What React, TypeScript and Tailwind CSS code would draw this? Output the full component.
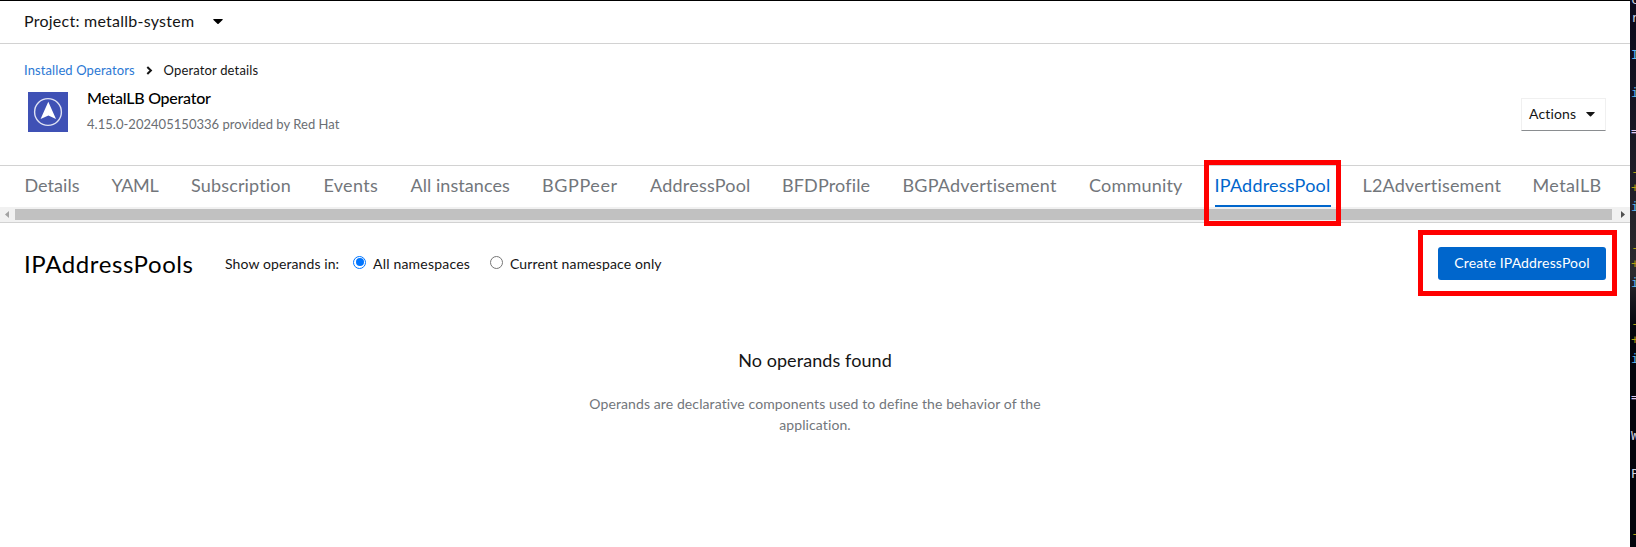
import type { ReactNode } from "react";

const tabs = [
  { label: "Details", cls: "w-[55px] tracking-[0.05px]" },
  { label: "YAML", cls: "w-[47.5px] -tracking-[0.3px]" },
  { label: "Subscription", cls: "w-[100.5px] tracking-[0.16px]" },
  { label: "Events", cls: "w-[55px] tracking-[0.3px]" },
  { label: "All instances", cls: "w-[99.5px] tracking-[0.06px]" },
  { label: "BGPPeer", cls: "w-[76px] tracking-[0.6px]" },
  { label: "AddressPool", cls: "w-[100px] tracking-[0.22px]" },
  { label: "BFDProfile", cls: "w-[88.5px] tracking-[0.15px]" },
  { label: "BGPAdvertisement", cls: "w-[154.5px] tracking-[0.22px]" },
  { label: "Community", cls: "w-[93.5px] tracking-[0.2px]" },
  { label: "IPAddressPool", cls: "w-[116px] tracking-[0.22px]", active: true },
  { label: "L2Advertisement", cls: "w-[138px] tracking-[0.2px]" },
  { label: "MetalLB", cls: "w-[70px] tracking-[0.4px]" },
];

function Caret({ size }: { size: number }) {
  return (
    <svg width={size} height={size / 2} viewBox="0 0 10 5" className="shrink-0">
      <path d="M0.6 0h8.8q.6.3.1.9L5.6 4.7q-.6.5-1.2 0L.5.9Q0 .3.6 0z" fill="currentColor" />
    </svg>
  );
}

function Logo() {
  return (
    <svg width="40" height="40" viewBox="0 0 40 40" className="mt-[5px] shrink-0">
      <rect width="40" height="40" fill="#3f51b5" />
      <circle cx="20" cy="20" r="13.4" fill="none" stroke="#dfe2f3" strokeWidth="1.4" />
      <path d="M20.3 9.8L28 27l-7.6-3.6L12.6 27z" fill="#fff" />
    </svg>
  );
}

function Radio({ checked, children }: { checked?: boolean; children: ReactNode }) {
  return (
    <label className="flex items-start">
      <span
        className={
          checked
            ? "mt-px flex size-[13px] items-center justify-center rounded-full border border-[#0075ff]"
            : "mt-px flex size-[13px] rounded-full border border-[#767676]"
        }
      >
        {checked && <span className="size-2 rounded-full bg-[#0075ff]" />}
      </span>
      <span className="ml-[7px] leading-[18px]">{children}</span>
    </label>
  );
}

const terminal = [
  { y: "top-[-9px]", c: "text-[#d0d0e0]", t: "c" },
  { y: "top-[9px]", c: "text-[#d0d0e0]", t: "r" },
  { y: "top-[46px]", c: "text-[#5fb7ee]", t: "I" },
  { y: "top-[84px]", c: "text-[#5fb7ee]", t: "i" },
  { y: "top-[122px]", c: "text-[#e0c8f0]", t: "=" },
  { y: "top-[163px]", c: "text-[#b09a10]", t: "-" },
  { y: "top-[179px]", c: "text-[#b09a10]", t: "+" },
  { y: "top-[198px]", c: "text-[#5fb7ee]", t: "i" },
  { y: "top-[239px]", c: "text-[#b09a10]", t: "-" },
  { y: "top-[255px]", c: "text-[#b09a10]", t: "+" },
  { y: "top-[274px]", c: "text-[#5fb7ee]", t: "i" },
  { y: "top-[315px]", c: "text-[#b09a10]", t: "-" },
  { y: "top-[331px]", c: "text-[#b09a10]", t: "+" },
  { y: "top-[350px]", c: "text-[#5fb7ee]", t: "i" },
  { y: "top-[388px]", c: "text-[#e0c8f0]", t: "=" },
  { y: "top-[427px]", c: "text-[#d0d0e0]", t: "W" },
  { y: "top-[465px]", c: "text-[#d0d0e0]", t: "P" },
  { y: "top-[525px]", c: "text-[#b09a10]", t: "-" },
];

export default function App() {
  return (
    <div className="flex h-[547px] w-[1636px] overflow-hidden bg-white font-['Lato',sans-serif] text-[14px] text-[#151515] [font-variant-ligatures:none]">
      <main className="relative flex w-[1630px] shrink-0 flex-col border-t border-black">
        <div className="flex h-[43px] items-center border-b border-[#d2d2d2] pl-6 text-base">
          <span className="pb-0.5 tracking-[0.25px]">Project: metallb-system</span>
          <span className="ml-[19px] pb-px text-black">
            <Caret size={10} />
          </span>
        </div>

        <header className="flex h-[122px] justify-between border-b border-[#d2d2d2] pr-6 pl-6">
          <div>
            <nav className="mt-4 flex h-5 items-center text-[13px] leading-5">
              <a className="w-[111px] text-[#2b78d4] tracking-[0.1px]">Installed Operators</a>
              <svg width="7" height="9" viewBox="0 0 7 9" className="ml-[11px]">
                <path d="M1.3 1l3.6 3.5L1.3 8" fill="none" stroke="#151515" strokeWidth="2" />
              </svg>
              <span className="ml-[10.5px] tracking-[0.16px]">Operator details</span>
            </nav>
            <div className="mt-[7px] flex pl-1">
              <Logo />
              <div className="ml-[19px]">
                <h1 className="text-base leading-[22px] font-medium text-black -tracking-[0.26px]">MetalLB Operator</h1>
                <p className="mt-[5px] text-[13px] leading-5 tracking-[0.03px] text-[#6a6e73]">4.15.0-202405150336 provided by Red Hat</p>
              </div>
            </div>
          </div>
          <button className="mt-[54px] flex h-[33px] w-[85px] items-center justify-between border border-[#f0f0f0] border-b-[#8a8d90] pr-[10px] pl-[7px]">
            <span className="pb-0.5 tracking-[0.15px]">Actions</span>
            <Caret size={9} />
          </button>
        </header>

        <div className="flex h-[41px] gap-8 pl-[24.5px] text-lg text-[#72767b]">
          {tabs.map((t) => (
            <div key={t.label} className={t.active ? "border-b-2 border-[#06c] text-[#06c]" : ""}>
              <div className={`${t.cls} whitespace-nowrap pt-[5px] leading-7`}>{t.label}</div>
            </div>
          ))}
        </div>

        <div className="flex h-4 items-center justify-between border-b border-[#d2d2d2] bg-[#f1f1f1] pr-[5px] pl-[5px]">
          <svg width="4" height="7" viewBox="0 0 4 7">
            <path d="M4 0v7L0 3.5z" fill="#a3a3a3" />
          </svg>
          <div className="mr-auto ml-[6px] h-[11px] w-[1597px] bg-[#c1c1c1]" />
          <svg width="4" height="7" viewBox="0 0 4 7">
            <path d="M0 0v7l4-3.5z" fill="#505050" />
          </svg>
        </div>

        <section className="flex h-[81px] items-center pr-6 pl-6">
          <h2 className="w-[201px] text-2xl tracking-[0.6px] text-black">IPAddressPools</h2>
          <span className="w-[128px] pb-px tracking-[0.1px]">Show operands in:</span>
          <div className="flex gap-5">
            <Radio checked>
              <span className="tracking-[0.2px]">All namespaces</span>
            </Radio>
            <Radio>
              <span className="tracking-[0.12px]">Current namespace only</span>
            </Radio>
          </div>
          <button className="ml-auto h-[33px] w-[168px] rounded-[3px] bg-[#06c] pb-0.5 text-white tracking-[0.16px]">
            Create IPAddressPool
          </button>
        </section>

        <section className="mt-[42px] flex flex-col items-center text-center">
          <h3 className="text-lg leading-7 tracking-[0.08px]">No operands found</h3>
          <p className="mt-[19px] w-[470px] leading-[21px] tracking-[0.1px] text-[#72767b]">
            Operands are declarative components used to define the behavior of the application.
          </p>
        </section>

        <div className="absolute top-[159px] left-[1204px] h-[66px] w-[137px] border-5 border-[#f00]" />
        <div className="absolute top-[229px] left-[1418px] h-[66px] w-[199px] border-5 border-[#f00]" />
      </main>

      <aside className="relative flex-1 overflow-hidden bg-linear-to-b from-[#0d0b1c] from-5% via-[#2c2a2e] via-50% to-[#04050c] to-60% font-['DejaVu_Sans_Mono',monospace] text-[13px] leading-[18px]">
        {terminal.map((g) => (
          <span key={g.y} className={`absolute left-px ${g.y} ${g.c}`}>
            {g.t}
          </span>
        ))}
      </aside>
    </div>
  );
}
